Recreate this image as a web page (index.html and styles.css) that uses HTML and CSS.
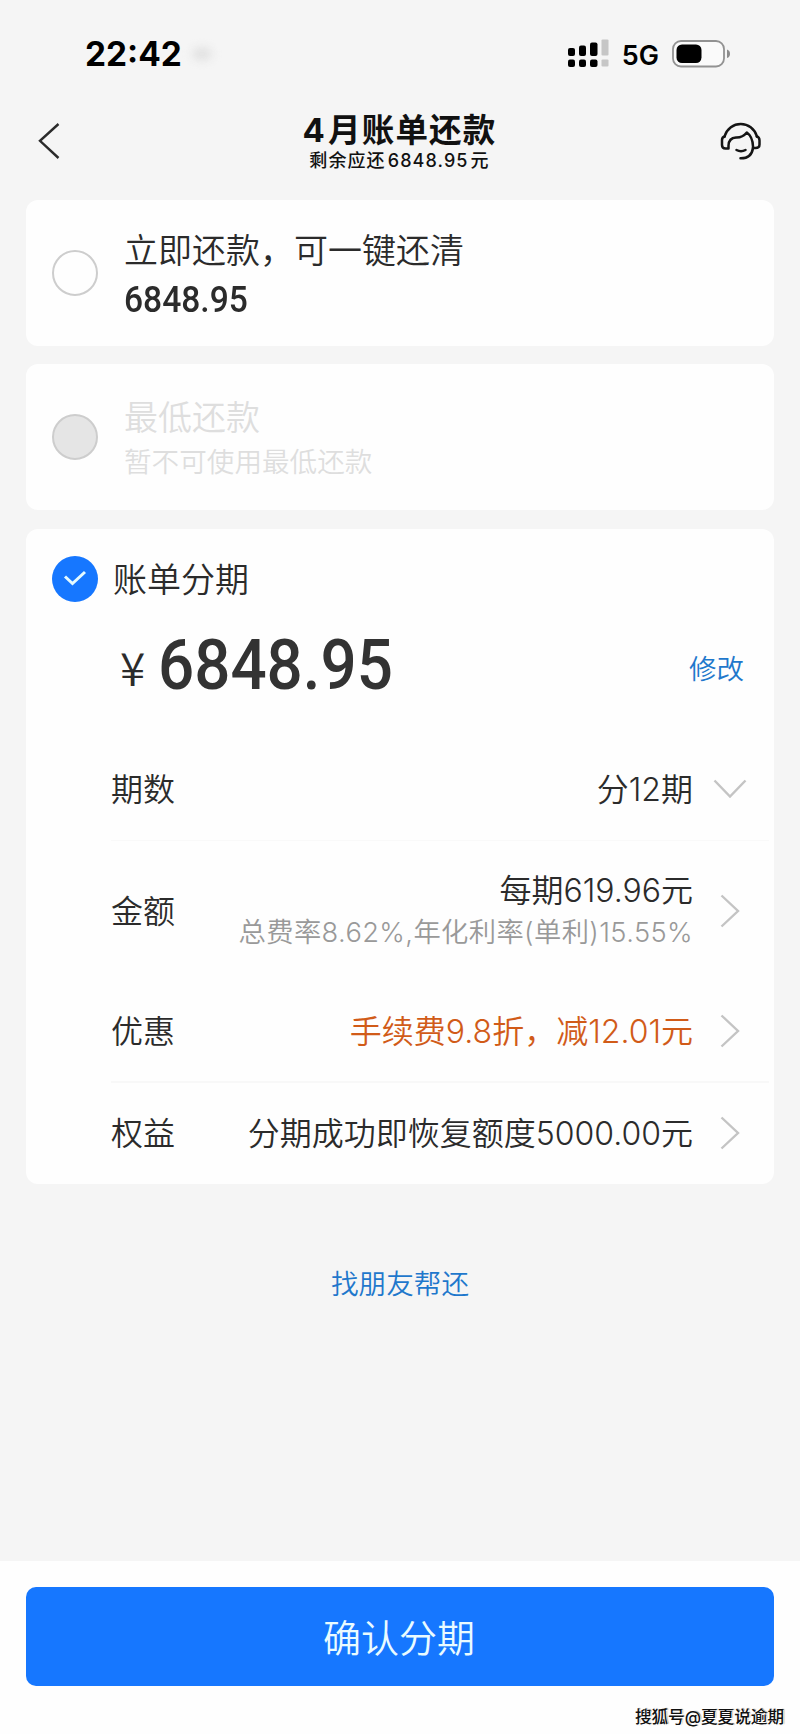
FILE: index.html
```html
<!DOCTYPE html>
<html lang="zh-CN">
<head>
<meta charset="utf-8">
<title>4月账单还款</title>
<link rel="stylesheet" href="styles.css">
</head>
<body>
<div class="screen">
  <div class="status">
    <span class="clock">22:42</span><span class="smudge"></span>
    <svg class="signal" width="42" height="30" viewBox="0 0 42 30">
      <rect x="0" y="9" width="7" height="8" rx="2"/><rect x="11" y="6.500" width="7" height="10.500" rx="2"/><rect x="22" y="3.500" width="7.500" height="13.500" rx="2"/>
      <rect x="0" y="20.500" width="7" height="7.500" rx="2"/><rect x="11" y="20.500" width="7" height="7.500" rx="2"/><rect x="22" y="20.500" width="7.500" height="7.500" rx="2"/>
      <rect x="33.500" y="0.500" width="7" height="16" rx="1" fill="#c6c6c6"/><rect x="33.500" y="20.500" width="7" height="7" rx="1" fill="#c6c6c6"/>
    </svg>
    <span class="net">5G</span>
    <svg class="battery" width="60" height="28" viewBox="0 0 60 28">
      <rect x="1" y="1" width="51" height="25.500" rx="8" fill="#fafafa" stroke="#929292" stroke-width="1.800"/>
      <rect x="4.500" y="4.500" width="25" height="18.500" rx="5.500"/>
      <path d="M55 9.500q3 1 3 4.300t-3 4.300z" fill="#8c8c8c"/>
    </svg>
  </div>
  <header class="nav">
    <svg class="back" width="24" height="38" viewBox="0 0 24 38"><path d="M21.500 2L3 18.800L21.500 36" fill="none" stroke="#2b2b2b" stroke-width="2.400"/></svg>
    <div class="heading">
      <h1 class="title"><span class="title-num">4</span>月账单还款</h1>
      <p class="subtitle">剩余应还<span class="subtitle-num">6848.95</span>元</p>
    </div>
    <svg class="service" width="42" height="40" viewBox="0 0 42 40" fill="none" stroke="#151515" stroke-width="2.500" stroke-linecap="round" stroke-linejoin="round">
      <path d="M4.500 14.500C7 6.500 13.500 2 20.800 2S34.500 6.500 37 14.500"/>
      <path d="M4.800 14.500Q2 15 2 18V23Q2 26.500 5.500 26.500H8.500V23.500Q8.800 16 16 15.500Q22.500 15.800 26.800 10.500Q32.600 14.500 33 24.500V26H35.500Q39.500 26 39.500 22.500V18.500Q39.500 15 36.700 14.500"/>
      <path d="M33 26Q31.500 36.500 20.500 36.300"/>
      <path d="M16.500 28Q21 30.600 25.500 28"/>
    </svg>
  </header>
  <main class="cards">
    <section class="card option">
      <span class="radio"></span>
      <div class="option-text option-text-first">
        <div class="option-title">立即还款，可一键还清</div>
        <div class="option-amount">6848.95</div>
      </div>
    </section>
    <section class="card option disabled">
      <span class="radio radio-off"></span>
      <div class="option-text">
        <div class="option-title">最低还款</div>
        <div class="option-note">暂不可使用最低还款</div>
      </div>
    </section>
    <section class="card plan">
      <div class="plan-head">
        <span class="radio radio-on"><svg width="24" height="18" viewBox="0 0 24 18"><path d="M2 6.500L9.500 13.500L22 2" fill="none" stroke="#e4faff" stroke-width="3"/></svg></span>
        <span class="plan-title">账单分期</span>
      </div>
      <div class="sum">
        <span class="yen">¥</span><span class="sum-num">6848.95</span><a class="edit">修改</a>
      </div>
      <div class="row row-term">
        <span class="label">期数</span><span class="value">分12期</span>
        <svg class="arrow" width="34" height="34" viewBox="0 0 34 34"><path d="M1.500 8.500L17 24.500L32.500 8.500"/></svg>
      </div>
      <div class="row row-amount">
        <span class="label">金额</span>
        <span class="value"><span class="value-main">每期619.96元</span><span class="value-note">总费率8.62%,年化利率(单利)15.55%</span></span>
        <svg class="arrow" width="34" height="34" viewBox="0 0 34 34"><path d="M8.500 1.500L25 17L8.500 32.500"/></svg>
      </div>
      <div class="row row-deal">
        <span class="label">优惠</span><span class="value deal">手续费9.8折，减12.01元</span>
        <svg class="arrow" width="34" height="34" viewBox="0 0 34 34"><path d="M8.500 1.500L25 17L8.500 32.500"/></svg>
      </div>
      <div class="row row-perk">
        <span class="label">权益</span><span class="value">分期成功即恢复额度5000.00元</span>
        <svg class="arrow" width="34" height="34" viewBox="0 0 34 34"><path d="M8.500 1.500L25 17L8.500 32.500"/></svg>
      </div>
    </section>
  </main>
  <a class="friend">找朋友帮还</a>
  <footer class="footer">
    <button class="confirm">确认分期</button>
    <div class="watermark">搜狐号@夏夏说逾期</div>
  </footer>
</div>
</body>
</html>
```
FILE: styles.css
```css
* { box-sizing: border-box; }
body { margin: 0; }
h1, p { margin: 0; }

.screen {
  width: 800px;
  height: 1734px;
  display: flex;
  flex-direction: column;
  overflow: hidden;
  background: #f5f5f5;
  color: #2b2b2b;
  font-family: Inter, "Noto Sans CJK SC", sans-serif;
  font-weight: 350;
}

/* status bar */
.status {
  height: 108px;
  padding: 0 68px 0 85px;
  display: flex;
  align-items: center;
  color: #000;
}
.clock { font-size: 33.4px; font-weight: 750; line-height: 40px; }
.smudge {
  width: 20px;
  height: 14px;
  margin-left: 10px;
  border-radius: 50%;
  background: #e2e2e2;
  filter: blur(4px);
}
.signal { margin-left: auto; }
.net { margin: 3px 13px 0 12px; font-size: 27px; font-weight: 600; line-height: 34px; }

/* title bar */
.nav {
  height: 92px;
  padding: 0 38px 0 37px;
  display: flex;
  justify-content: space-between;
  align-items: flex-start;
  color: #111;
}
.back { margin-top: 14px; }
.heading { text-align: center; padding: 2px 0 0 18px; }
.title { font-size: 32.5px; line-height: 40px; font-weight: 600; letter-spacing: 1.2px; }
.title-num { font-size: 33px; font-weight: 700; margin-right: 2px; }
.subtitle { margin-top: -2px; font-size: 18px; line-height: 24px; font-weight: 500; letter-spacing: 1.1px; }
.subtitle-num { margin: 0 2px; }
.service { margin-top: 14px; }

/* cards */
.cards { padding: 0 26px; display: flex; flex-direction: column; gap: 18px; }
.card { background: #fefefe; border-radius: 12px; }
.option {
  height: 146px;
  padding: 0 26px;
  display: flex;
  align-items: center;
}
.radio {
  flex: none;
  width: 46px;
  height: 46px;
  border: 2px solid #cdcdcd;
  border-radius: 50%;
}
.radio-off { background: #e5e5e5; }
.radio-on {
  border: 0;
  background: #1677ff;
  display: flex;
  align-items: center;
  justify-content: center;
}
.option-text { margin-left: 26px; }
.option-text-first { padding-top: 3px; }
.option-title { font-size: 34px; line-height: 50px; }
.option-amount {
  font-family: Roboto, sans-serif;
  font-size: 36.5px;
  font-weight: 500;
  line-height: 48px;
  transform: scaleX(0.92);
  transform-origin: left;
}
.disabled { color: #dedede; }
.option-note { font-size: 27.6px; line-height: 38px; }

.plan { height: 655px; margin-top: 1px; }
.plan-head { height: 100px; padding-left: 26px; display: flex; align-items: center; }
.plan-title { margin: -4px 0 0 15px; font-size: 34px; }
.sum {
  height: 74px;
  margin-bottom: 35px;
  padding: 0 30px 0 94px;
  display: flex;
  align-items: center;
  line-height: 74px;
}
.yen { font-family: "Noto Sans CJK SC", sans-serif; font-size: 46px; }
.sum-num {
  font-family: Roboto, sans-serif;
  font-size: 70px;
  font-weight: 500;
  color: #333;
  margin: -2px 0 0 13px;
  transform: scaleX(0.91);
  transform-origin: left;
}
.edit { margin: 5px 0 0 auto; font-size: 27.5px; color: #1f78cc; }

.row {
  margin-left: 85px;
  margin-right: 5px;
  padding-right: 22px;
  display: flex;
  align-items: center;
  font-size: 32px;
  line-height: 42px;
}
.row-term { height: 103px; border-bottom: 1px solid #f9f9f9; }
.row-amount { height: 140px; }
.row-deal { height: 102px; border-bottom: 2px solid #f8f8f8; }
.row-perk { height: 100px; }
.label, .value { padding-top: 1px; }
.value { margin-left: auto; text-align: right; }
.value-main, .value-note { display: block; }
.value-note { font-size: 27.3px; letter-spacing: 0.38px; color: #999; }
.deal { color: #d15b18; }
.arrow { flex: none; margin-left: 20px; fill: none; stroke: #c4c4c4; stroke-width: 2.4; }

.friend { margin: 79px auto 0; font-size: 27.6px; line-height: 42px; color: #1f78cc; }

/* bottom bar */
.footer {
  height: 173px;
  margin-top: auto;
  padding: 26px 26px 0;
  background: #fefefe;
}
.confirm {
  display: block;
  width: 100%;
  height: 99px;
  padding: 0 2px 3px 0;
  border: 0;
  border-radius: 10px;
  background: #1677ff;
  color: #e9fbff;
  font: 350 38px "Noto Sans CJK SC", sans-serif;
}
.watermark {
  margin: 19px -10px 0 0;
  text-align: right;
  font-size: 16.6px;
  line-height: 24px;
  font-weight: 500;
  color: #111;
  text-shadow: 1px 1px 0 #fff, -1px -1px 0 #fff, 1px 0 1px #555;
}
```
